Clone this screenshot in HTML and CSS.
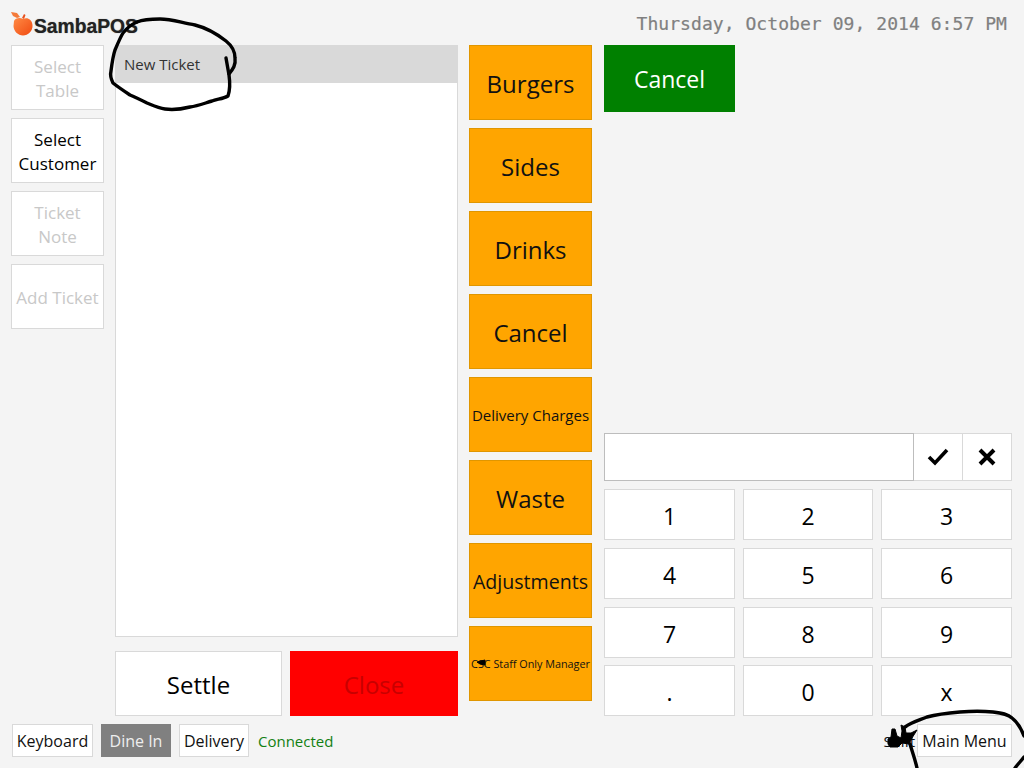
FILE: index.html
```html
<!DOCTYPE html>
<html lang="en">
<head>
<meta charset="utf-8">
<title>SambaPOS</title>
<link rel="stylesheet" href="styles.css">
</head>
<body>
<div class="app">
  <header class="top">
    <div class="logo">
      <svg class="apple" width="23" height="26" viewBox="0 0 23 26"><defs><linearGradient id="ag" x1="0" y1="0" x2="1" y2="1"><stop offset="0" stop-color="#ff8a45"/><stop offset="1" stop-color="#f04a10"/></linearGradient></defs><path d="M0 1 L6 2 L9 6 L6 7 L2 5 Z" fill="#f47a3a"/><path d="M11 7 L13 3 L14.500 4 L13 8 Z" fill="#e8501c"/><path d="M3 10 C4 7 9 6 12 8 C16 6 21 8 21.500 14 C22 20 17 24.500 12 24.500 C7 24.500 2.500 20 2.500 15 Z" fill="url(#ag)"/></svg>
      <span class="logo-text">SambaPOS</span>
    </div>
    <div class="clock">Thursday, October 09, 2014 6:57 PM</div>
  </header>
  <main class="main">
    <nav class="side">
      <div class="btn side-btn off">Select Table</div>
      <div class="btn side-btn">Select Customer</div>
      <div class="btn side-btn off">Ticket Note</div>
      <div class="btn side-btn off">Add Ticket</div>
    </nav>
    <section class="ticket">
      <div class="ticket-box"><div class="ticket-head">New Ticket</div></div>
      <div class="ticket-actions">
        <div class="btn settle">Settle</div>
        <div class="btn close">Close</div>
      </div>
    </section>
    <section class="cats">
      <div class="cat">Burgers</div>
      <div class="cat">Sides</div>
      <div class="cat">Drinks</div>
      <div class="cat">Cancel</div>
      <div class="cat small">Delivery Charges</div>
      <div class="cat">Waste</div>
      <div class="cat mid">Adjustments</div>
      <div class="cat tiny">CSC Staff Only Manager</div>
    </section>
    <section class="right">
      <div class="cancel">Cancel</div>
      <div class="entry">
        <div class="field"></div>
        <div class="btn icon-btn"><svg width="22" height="18" viewBox="0 0 22 18"><path d="M2 9 L8 15 L20 2" fill="none" stroke="#000" stroke-width="3.600"/></svg></div>
        <div class="btn icon-btn"><svg width="18" height="18" viewBox="0 0 18 18"><path d="M2 2 L16 16 M16 2 L2 16" fill="none" stroke="#000" stroke-width="4"/></svg></div>
      </div>
      <div class="keypad">
        <div class="btn key">1</div><div class="btn key">2</div><div class="btn key">3</div>
        <div class="btn key">4</div><div class="btn key">5</div><div class="btn key">6</div>
        <div class="btn key">7</div><div class="btn key">8</div><div class="btn key">9</div>
        <div class="btn key">.</div><div class="btn key">0</div><div class="btn key">x</div>
      </div>
    </section>
  </main>
  <footer class="bottom">
    <div class="btn foot kb">Keyboard</div>
    <div class="btn foot dine">Dine In</div>
    <div class="btn foot deliv">Delivery</div>
    <span class="status">Connected</span>
    <span class="shift">Shift</span>
    <div class="btn foot menu">Main Menu</div>
  </footer>
  <svg class="ink" width="1024" height="768" viewBox="0 0 1024 768">
    <g fill="none" stroke="#000" stroke-width="3.400" stroke-linecap="round" stroke-linejoin="round">
      <path d="M137 22 C142 20 150 19 160 19 C172 19 182 23 195 25 C207 28 217 34 226 41 C231 45 235 50 235 58 C236 65 233 69 229 74"/>
      <path d="M226 58 L229 75 C230 82 230 90 228 96 C223 99 217 99 212 101 C205 103 198 106 190 107 C182 109 172 110 165 109 C158 108 152 105 147 103 C141 100 135 97 130 95 C124 91 118 87 113 83 C111 79 110 75 111 71 C112 63 113 56 115 50 C118 43 120 38 123 33 C127 28 132 24 137 22"/>
      <path d="M905 727 C912 722 920 720 927 717 C938 714 948 713 960 712 C972 711 983 711 993 712 C1002 713 1008 714 1012 718 C1017 722 1021 728 1024 736"/>
      <path d="M910 744 C912 751 915 759 917 768"/>
      <path d="M1024 757 C1021 761 1018 764 1015 768"/>
    </g>
    <g fill="#000" stroke="#000" stroke-width="1" stroke-linejoin="round">
      <path d="M888 739 L891 737 L892 729 L895 729 L897 736 L901 738 L902 731 L901 725 L905 727 L906 733 L911 733 L917 730 L912 738 L909 744 L902 743 L898 747 L890 747 L888 744 Z"/>
      <path d="M477 662 L485 660 L485 665 L480 664 Z"/>
    </g>
  </svg>
</div>
</body>
</html>
```
FILE: styles.css
```css
* { box-sizing: border-box; }
html, body { margin: 0; padding: 0; }
body { width: 1024px; height: 768px; overflow: hidden; background: #f4f4f4; font-family: "Open Sans", "Noto Sans", sans-serif; color: #000; }
.app { position: relative; width: 1024px; height: 768px; display: flex; flex-direction: column; }
.top { height: 45px; display: flex; justify-content: space-between; padding: 11px 17px 0 11px; }
.logo { display: flex; align-items: flex-start; }
.apple { flex: none; }
.logo-text { margin: 5px 0 0 0; font-family: "Liberation Sans", sans-serif; font-weight: 700; font-size: 19.300px; line-height: 22px; color: #222; text-shadow: 0 0 1px #777; }
.clock { font-family: "DejaVu Sans Mono", monospace; font-size: 18px; letter-spacing: 0.060px; line-height: 26px; color: #808080; -webkit-text-stroke: 0.2px #808080; }
.main { height: 679px; display: flex; align-items: flex-start; padding-left: 11px; }
.btn { display: flex; align-items: center; justify-content: center; text-align: center; background: #fff; border: 1px solid #d9d9d9; }
.side { width: 93px; display: flex; flex-direction: column; gap: 8px; }
.side-btn { height: 65px; font-size: 17px; line-height: 24px; padding: 2px 2px 0; }
.off { color: #c8c8c8; }
.ticket { width: 343px; margin-left: 11px; }
.ticket-box { height: 592px; background: #fff; border: 1px solid #d9d9d9; border-top: 0; }
.ticket-head { height: 38px; margin: 0 -1px; background: #d9d9d9; padding: 0 9px; font-size: 15px; line-height: 38px; color: #333; }
.ticket-actions { display: flex; gap: 8px; margin-top: 14px; }
.settle { width: 167px; height: 65px; padding-top: 2px; font-size: 24px; }
.close { width: 168px; height: 65px; padding-top: 2px; font-size: 24px; background: #f00; border: 0; color: #c80000; }
.cats { width: 123px; margin-left: 11px; display: flex; flex-direction: column; gap: 8px; }
.cat { height: 75px; display: flex; align-items: center; justify-content: center; padding-top: 2px; background: #ffa500; border: 1px solid #e09600; font-size: 24px; color: #111; white-space: nowrap; }
.small { font-size: 15px; padding-top: 0; }
.mid { font-size: 19.600px; }
.tiny { font-size: 10.800px; padding-top: 0; }
.right { width: 408px; margin-left: 12px; }
.cancel { width: 131px; height: 67px; display: flex; align-items: center; justify-content: center; background: #008000; color: #fff; font-size: 23px; }
.entry { display: flex; height: 48px; margin-top: 321px; }
.field { width: 310px; background: #fff; border: 1px solid #bdbdbd; }
.icon-btn { width: 49px; border-left: 0; }
.keypad { display: grid; grid-template-columns: 131px 130px 131px; grid-template-rows: 51px 51px 51px 51px; column-gap: 8px; row-gap: 8px; margin-top: 8px; }
.keypad .key:nth-child(n+10) { margin-top: -1px; margin-bottom: 1px; }
.key { padding-top: 2px; font-size: 23px; }
.bottom { height: 44px; display: flex; align-items: flex-start; padding: 0 12px; }
.foot { height: 33px; font-size: 16px; white-space: nowrap; color: #111; }
.kb { width: 81px; }
.dine { width: 70px; margin-left: 8px; background: #808080; border-color: #808080; color: #eee; }
.deliv { width: 70px; margin-left: 8px; }
.status { margin-left: 9px; line-height: 35px; font-size: 15px; color: #128012; }
.shift { margin-left: auto; line-height: 35px; font-size: 15px; color: #111; }
.menu { width: 95px; margin-left: 2px; }
.ink { position: absolute; left: 0; top: 0; pointer-events: none; }
```
